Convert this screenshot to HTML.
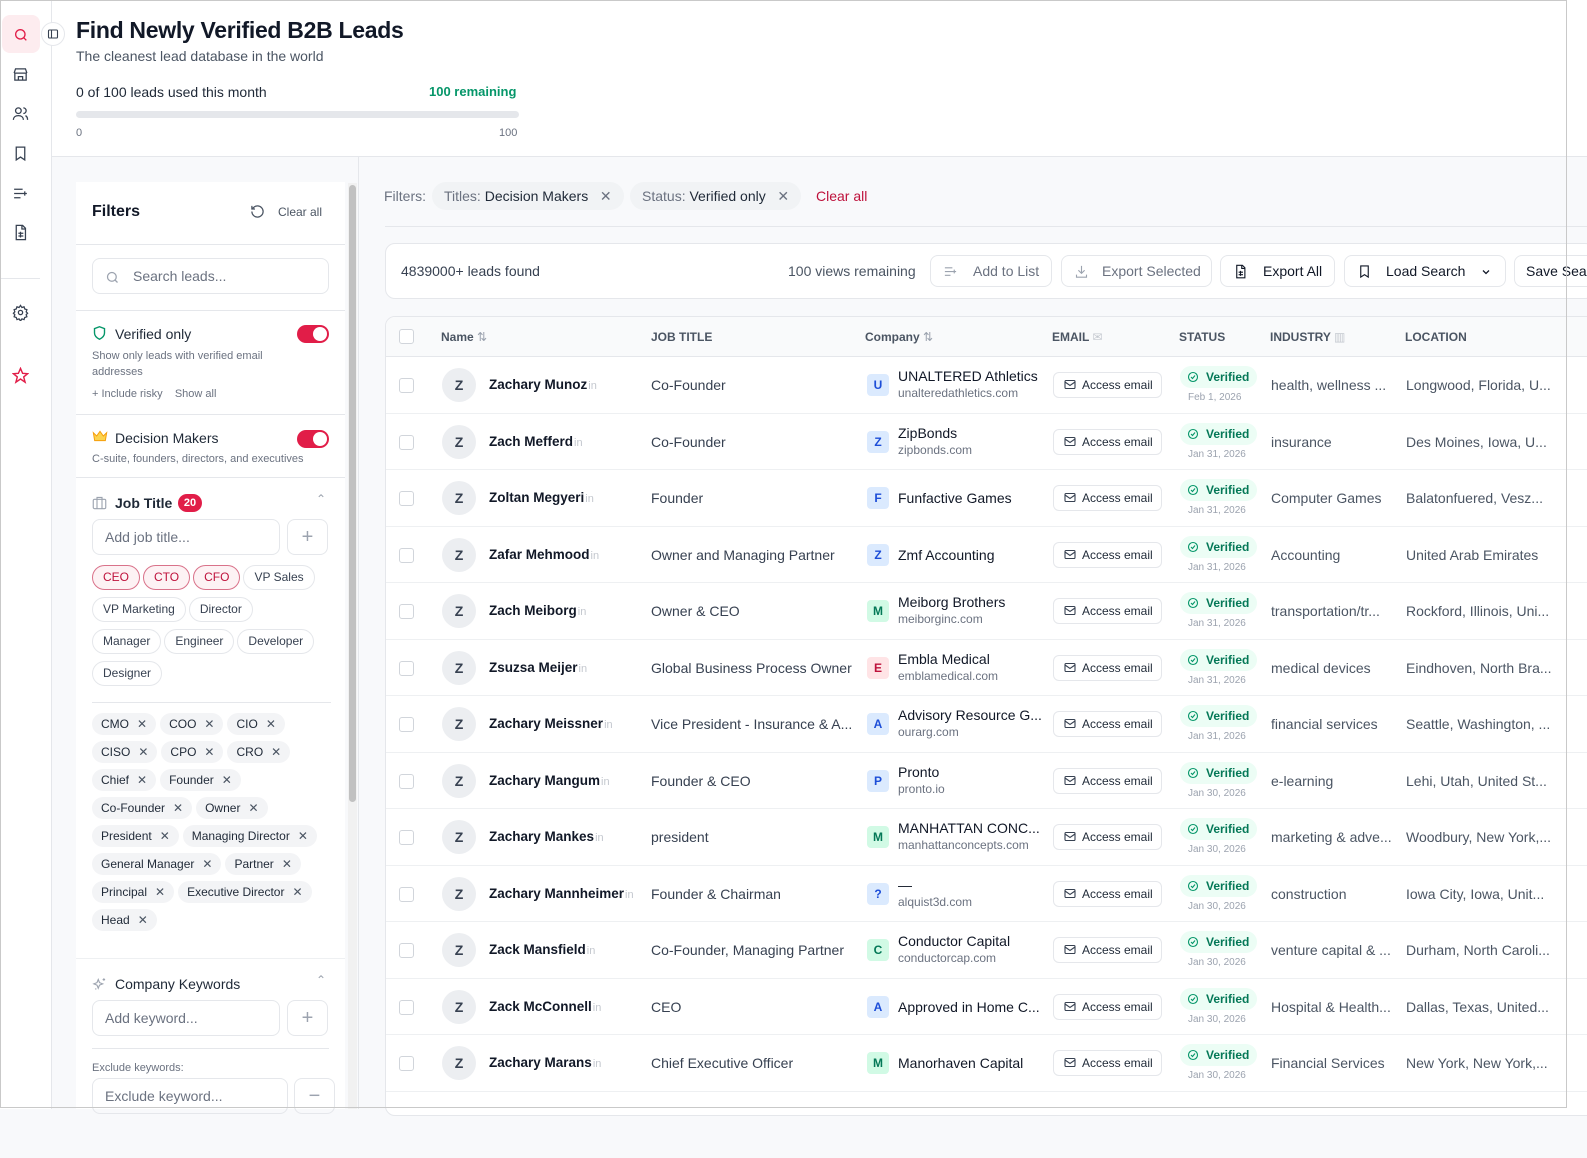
<!DOCTYPE html>
<html><head><meta charset="utf-8">
<style>
*{box-sizing:border-box;margin:0;padding:0}
body{width:1587px;height:1109px;overflow:hidden;font-family:"Liberation Sans",Arial,sans-serif;color:#111827;background:#f8f9fb;position:relative}
.abs{position:absolute}
.frame{position:absolute;left:0;top:0;width:1567px;height:1108px;border:1px solid #c9c9c9;pointer-events:none;z-index:50}
.side{position:absolute;left:0;top:0;width:52px;height:1109px;background:#fff;border-right:1px solid #e5e7eb}
.side svg{position:absolute;left:12px}
.head{position:absolute;left:52px;top:0;width:1535px;height:157px;background:#fff;border-bottom:1px solid #e5e7eb}
.fp{position:absolute;left:76px;top:182px;width:269px;height:927px;background:#fff}
.sec{border-bottom:1px solid #e5e7eb}
.chip{display:inline-block;border:1px solid #e5e7eb;border-radius:14px;padding:0 10px;height:25px;line-height:23px;font-size:12px;color:#374151;margin:0 3px 7px 0}
.chip.r{border-color:#d9728a;background:#fdf2f4;color:#be123c}
.tg{display:inline-block;background:#f3f4f6;border-radius:14px;padding:0 9px;height:22px;line-height:22px;font-size:12px;color:#1f2937;margin:0 4px 6px 0}
.tg b{font-weight:normal;color:#4b5563;margin-left:8px;font-size:12px}
.inp{position:absolute;height:36px;border:1px solid #e5e7eb;border-radius:8px;font-size:14px;color:#6b7280;line-height:34px;padding-left:12px}
.pbtn{position:absolute;width:41px;height:36px;border:1px solid #e5e7eb;border-radius:8px;text-align:center;line-height:34px;color:#9ca3af;font-size:20px}
.tog{position:absolute;width:32px;height:18px;border-radius:9px;background:#e11d48}
.tog:after{content:"";position:absolute;right:2px;top:2px;width:14px;height:14px;border-radius:50%;background:#fff}
.btn{position:absolute;top:255px;height:32px;border:1px solid #e5e7eb;border-radius:8px;background:#fff;font-size:14px;line-height:30px}
.tbl{position:absolute;left:385px;top:316px;width:1220px;height:800px;background:#fff;border:1px solid #e5e7eb;border-radius:10px;overflow:hidden}
.th{position:absolute;left:0;top:0;width:100%;height:40px;background:#f9fafb;border-bottom:1px solid #e5e7eb;font-size:12px;font-weight:bold;color:#4b5563}
.th span{position:absolute;top:13px}
.row{position:relative;height:56.5px;border-bottom:1px solid #eef0f2;font-size:14px}
.row>*{position:absolute}
.cb{left:13px;top:21px;width:15px;height:15px;border:1px solid #d1d5db;border-radius:3px}
.av{left:56px;top:11px;width:34px;height:34px;border-radius:50%;background:#eceef1;text-align:center;line-height:34px;font-weight:bold;font-size:14px;color:#374151}
.nm{left:103px;top:20px;font-weight:bold;color:#111827;font-size:13.5px}
.nm i{font-style:normal;color:#c4c8cf;font-weight:normal;font-size:11px;margin-left:1px}
.jt{left:265px;top:20px;color:#374151}
.lg{left:481px;top:17px;width:22px;height:22px;border-radius:4px;text-align:center;line-height:22px;font-size:12px;font-weight:bold}
.lg.b{background:#dbeafe;color:#1d4ed8}.lg.g{background:#d1fae5;color:#047857}.lg.p{background:#ffe4e6;color:#be123c}
.cn{left:512px;top:11px;color:#111827;line-height:17px}
.cn.s{top:20px}
.cn small{display:block;font-size:12px;color:#6b7280;line-height:16px}
.em{left:667px;top:15px;width:109px;height:26px;border:1px solid #e5e7eb;border-radius:6px;font-size:12px;line-height:24px;padding-left:28px;color:#1f2937}
.em svg{position:absolute;left:10px;top:6px}
.st{left:794px;top:9px;height:22px;padding:0 8px 0 26px;background:#ecfdf5;border-radius:11px;color:#047857;font-size:12px;font-weight:bold;line-height:22px}
.st svg{position:absolute;left:7px;top:5px}
.dt{left:802px;top:35px;font-size:10px;color:#9ca3af}
.in{left:885px;top:20px;color:#4b5563}
.lc{left:1020px;top:20px;color:#4b5563}
</style></head><body>
<div class="frame"></div>
<div class="side">
 <div class="abs" style="left:2px;top:15px;width:38px;height:38px;border-radius:8px;background:#fdecef"></div>
 <svg style="left:13px;top:27px" width="16" height="16" viewBox="0 0 24 24" fill="none" stroke="#e11d48" stroke-width="2"><circle cx="11" cy="11" r="7"/><path d="M20 20l-4-4"/></svg>
 <svg style="top:66px" width="17" height="17" viewBox="0 0 24 24" fill="none" stroke="#374151" stroke-width="1.8"><path d="M4 10v10h16V10M3 10l2-6h14l2 6M3 10h18M9 20v-5h6v5"/></svg>
 <svg style="top:105px" width="17" height="17" viewBox="0 0 24 24" fill="none" stroke="#374151" stroke-width="1.8"><circle cx="9" cy="8" r="4"/><path d="M2 21c0-4 3-6 7-6s7 2 7 6M16 4a4 4 0 010 8M19 15c2 1 3 3 3 6"/></svg>
 <svg style="top:145px" width="17" height="17" viewBox="0 0 24 24" fill="none" stroke="#374151" stroke-width="1.8"><path d="M6 3h12v18l-6-4-6 4z"/></svg>
 <svg style="top:185px" width="17" height="17" viewBox="0 0 24 24" fill="none" stroke="#374151" stroke-width="1.8"><path d="M3 6h12M3 12h12M3 18h9M18 9v6M15 12h6"/></svg>
 <svg style="top:224px" width="17" height="17" viewBox="0 0 24 24" fill="none" stroke="#374151" stroke-width="1.8"><path d="M6 2h9l4 4v16H6zM14 2v5h5M9 13h7M9 17h7M12 11v8"/></svg>
 <div class="abs" style="left:0;top:278px;width:40px;height:1px;background:#e5e7eb"></div>
 <svg style="top:304px" width="17" height="17" viewBox="0 0 24 24" fill="none" stroke="#374151" stroke-width="1.8"><circle cx="12" cy="12" r="3"/><path d="M12 2l2 3 3-1 1 3 3 1-1 3 2 2-2 2 1 3-3 1-1 3-3-1-2 3-2-3-3 1-1-3-3-1 1-3-2-2 2-2-1-3 3-1 1-3 3 1z"/></svg>
 <svg style="top:367px" width="17" height="17" viewBox="0 0 24 24" fill="none" stroke="#e11d48" stroke-width="2"><path d="M12 2l3 7 7 .5-5.5 4.5 2 7.5L12 17l-6.5 4.5 2-7.5L2 9.5 9 9z"/></svg>
</div>
<div class="abs" style="left:41px;top:22px;width:24px;height:24px;border-radius:50%;background:#fff;border:1px solid #e5e7eb;z-index:5"><svg style="position:absolute;left:5px;top:5px" width="12" height="12" viewBox="0 0 24 24" fill="none" stroke="#374151" stroke-width="2.2"><rect x="3" y="4" width="18" height="16" rx="2"/><path d="M9 4v16"/></svg></div>
<div class="head">
 <div class="abs" style="left:24px;top:17px;font-size:23px;font-weight:bold;color:#111827;letter-spacing:-0.3px">Find Newly Verified B2B Leads</div>
 <div class="abs" style="left:24px;top:48px;font-size:14px;color:#4b5563">The cleanest lead database in the world</div>
 <div class="abs" style="left:24px;top:84px;font-size:14px;color:#1f2937">0 of 100 leads used this month</div>
 <div class="abs" style="left:377px;top:84px;font-size:13px;font-weight:bold;color:#059669">100 remaining</div>
 <div class="abs" style="left:24px;top:111px;width:443px;height:7px;border-radius:4px;background:#e5e7eb"></div>
 <div class="abs" style="left:24px;top:127px;font-size:11px;color:#6b7280">0</div>
 <div class="abs" style="left:447px;top:127px;font-size:11px;color:#6b7280">100</div>
</div>
<div class="fp">
 <div class="sec" style="height:63px;position:relative">
  <div class="abs" style="left:16px;top:21px;font-size:16px;font-weight:bold">Filters</div>
  <svg class="abs" style="left:174px;top:22px" width="15" height="15" viewBox="0 0 24 24" fill="none" stroke="#4b5563" stroke-width="2"><path d="M3 12a9 9 0 109-9 9 9 0 00-6.5 2.8L3 8M3 3v5h5"/></svg>
  <div class="abs" style="left:202px;top:23px;font-size:12px;color:#4b5563">Clear all</div>
 </div>
 <div class="sec" style="height:66px;position:relative">
  <div class="inp" style="left:16px;top:13px;width:237px;padding-left:40px;color:#6b7280">Search leads...</div>
  <svg class="abs" style="left:29px;top:25px" width="15" height="15" viewBox="0 0 24 24" fill="none" stroke="#9ca3af" stroke-width="2"><circle cx="11" cy="11" r="7"/><path d="M20 20l-4-4"/></svg>
 </div>
 <div class="sec" style="height:104px;position:relative">
  <svg class="abs" style="left:16px;top:14px" width="15" height="16" viewBox="0 0 24 24" fill="none" stroke="#059669" stroke-width="2.2"><path d="M12 2l8 3v7c0 5-4 8-8 10-4-2-8-5-8-10V5z"/></svg>
  <div class="abs" style="left:39px;top:15px;font-size:14px;color:#1f2937">Verified only</div>
  <div class="tog" style="left:221px;top:14px"></div>
  <div class="abs" style="left:16px;top:37px;font-size:11px;color:#6b7280;line-height:16px;width:210px">Show only leads with verified email addresses</div>
  <div class="abs" style="left:16px;top:77px;font-size:11px;color:#6b7280">+ Include risky &nbsp;&nbsp; Show all</div>
 </div>
 <div class="sec" style="height:63px;position:relative">
  <svg class="abs" style="left:16px;top:14px" width="16" height="14" viewBox="0 0 24 20" fill="#fcd34d" stroke="#f59e0b" stroke-width="1.5"><path d="M2 5l5 5 5-7 5 7 5-5-2 12H4z"/></svg>
  <div class="abs" style="left:39px;top:15px;font-size:14px;color:#1f2937">Decision Makers</div>
  <div class="tog" style="left:221px;top:15px"></div>
  <div class="abs" style="left:16px;top:38px;font-size:11px;color:#6b7280">C-suite, founders, directors, and executives</div>
 </div>
 <div style="position:relative;height:224px">
  <svg class="abs" style="left:16px;top:18px" width="15" height="14" viewBox="0 0 24 22" fill="none" stroke="#9ca3af" stroke-width="1.8"><rect x="2" y="5" width="20" height="15" rx="2"/><path d="M8 5V2h8v3M8 5v15M16 5v15"/></svg>
  <div class="abs" style="left:39px;top:17px;font-size:14px;font-weight:bold;color:#1f2937">Job Title</div>
  <div class="abs" style="left:102px;top:16px;width:24px;height:18px;border-radius:9px;background:#e11d48;color:#fff;font-size:11px;font-weight:bold;text-align:center;line-height:18px">20</div>
  <div class="abs" style="left:240px;top:14px;font-size:12px;color:#9ca3af">&#8963;</div>
  <div class="inp" style="left:16px;top:41px;width:188px">Add job title...</div>
  <div class="pbtn" style="left:211px;top:41px">+</div>
  <div class="abs" style="left:16px;top:87px;width:226px">
   <span class="chip r">CEO</span><span class="chip r">CTO</span><span class="chip r">CFO</span><span class="chip">VP Sales</span><span class="chip">VP Marketing</span><span class="chip">Director</span><span class="chip">Manager</span><span class="chip">Engineer</span><span class="chip">Developer</span><span class="chip">Designer</span>
  </div>
 </div>
 <div style="position:relative;height:256px;margin:0 14px 0 16px;border-top:1px solid #e5e7eb">
  <div class="abs" style="left:0;top:10px;width:240px">
   <span class="tg">CMO<b>✕</b></span><span class="tg">COO<b>✕</b></span><span class="tg">CIO<b>✕</b></span><span class="tg">CISO<b>✕</b></span><span class="tg">CPO<b>✕</b></span><span class="tg">CRO<b>✕</b></span><span class="tg">Chief<b>✕</b></span><span class="tg">Founder<b>✕</b></span><span class="tg">Co-Founder<b>✕</b></span><span class="tg">Owner<b>✕</b></span><span class="tg">President<b>✕</b></span><span class="tg">Managing Director<b>✕</b></span><span class="tg">General Manager<b>✕</b></span><span class="tg">Partner<b>✕</b></span><span class="tg">Principal<b>✕</b></span><span class="tg">Executive Director<b>✕</b></span><span class="tg">Head<b>✕</b></span>
  </div>
 </div>
 <div style="position:relative;height:200px;border-top:1px solid #eef0f2">
  <svg class="abs" style="left:16px;top:18px" width="15" height="15" viewBox="0 0 24 24" fill="none" stroke="#9ca3af" stroke-width="1.8"><path d="M10 4l2 5 5 2-5 2-2 5-2-5-5-2 5-2zM19 2v4M17 4h4M5 19h2"/></svg>
  <div class="abs" style="left:39px;top:17px;font-size:14px;color:#1f2937">Company Keywords</div>
  <div class="abs" style="left:240px;top:14px;font-size:12px;color:#9ca3af">&#8963;</div>
  <div class="inp" style="left:16px;top:41px;width:188px">Add keyword...</div>
  <div class="pbtn" style="left:211px;top:41px">+</div>
  <div class="abs" style="left:16px;top:89px;width:237px;height:1px;background:#e5e7eb"></div>
  <div class="abs" style="left:16px;top:103px;font-size:11px;color:#6b7280">Exclude keywords:</div>
  <div class="inp" style="left:16px;top:119px;width:196px">Exclude keyword...</div>
  <div class="pbtn" style="left:218px;top:119px">−</div>
 </div>
</div>
<div class="abs" style="left:348px;top:183px;width:9px;height:926px;background:#f1f1f1"></div>
<div class="abs" style="left:349px;top:185px;width:7px;height:617px;border-radius:4px;background:#c1c1c1"></div>
<div class="abs" style="left:358px;top:157px;width:1px;height:952px;background:#e5e7eb"></div>
<div class="abs" style="left:384px;top:188px;font-size:14px;color:#6b7280">Filters:</div>
<div class="abs" style="left:432px;top:182px;height:28px;border-radius:14px;background:#f1f3f5;padding:0 12px;line-height:28px;font-size:14px;color:#6b7280">Titles: <span style="color:#1f2937">Decision Makers</span> &nbsp;&nbsp;✕</div>
<div class="abs" style="left:630px;top:182px;height:28px;border-radius:14px;background:#f1f3f5;padding:0 12px;line-height:28px;font-size:14px;color:#6b7280">Status: <span style="color:#1f2937">Verified only</span> &nbsp;&nbsp;✕</div>
<div class="abs" style="left:816px;top:188px;font-size:14px;color:#be123c">Clear all</div>
<div class="abs" style="left:385px;top:226px;width:1202px;height:1px;background:#e5e7eb"></div>
<div class="abs" style="left:385px;top:243px;width:1210px;height:56px;background:#fff;border:1px solid #e5e7eb;border-radius:10px"></div>
<div class="abs" style="left:401px;top:263px;font-size:14px;color:#374151">4839000+ leads found</div>
<div class="abs" style="left:788px;top:263px;font-size:14px;color:#4b5563">100 views remaining</div>
<div class="btn" style="left:930px;width:122px;color:#6b7280;padding-left:42px">Add to List<svg style="position:absolute;left:12px;top:8px" width="15" height="15" viewBox="0 0 24 24" fill="none" stroke="#9ca3af" stroke-width="1.8"><path d="M3 6h12M3 12h12M3 18h9M18 9v6M15 12h6"/></svg></div>
<div class="btn" style="left:1061px;width:151px;color:#6b7280;padding-left:40px">Export Selected<svg style="position:absolute;left:12px;top:8px" width="15" height="15" viewBox="0 0 24 24" fill="none" stroke="#9ca3af" stroke-width="1.8"><path d="M12 3v12M7 10l5 5 5-5M4 17v4h16v-4"/></svg></div>
<div class="btn" style="left:1220px;width:115px;color:#111827;padding-left:42px">Export All<svg style="position:absolute;left:12px;top:8px" width="15" height="15" viewBox="0 0 24 24" fill="none" stroke="#111827" stroke-width="1.8"><path d="M6 2h9l4 4v16H6zM14 2v5h5M9 13h7M9 17h7M12 11v8"/></svg></div>
<div class="btn" style="left:1344px;width:162px;color:#111827;padding-left:41px">Load Search<svg style="position:absolute;left:12px;top:8px" width="15" height="15" viewBox="0 0 24 24" fill="none" stroke="#111827" stroke-width="1.8"><path d="M6 3h12v18l-6-4-6 4z"/></svg><svg style="position:absolute;left:135px;top:10px" width="12" height="12" viewBox="0 0 24 24" fill="none" stroke="#111827" stroke-width="2.5"><path d="M6 9l6 6 6-6"/></svg></div>
<div class="btn" style="left:1514px;width:100px;color:#111827;padding-left:11px">Save Search</div>
<div class="tbl">
 <div class="th">
  <div class="abs" style="left:13px;top:12px;width:15px;height:15px;border:1px solid #d1d5db;border-radius:3px;background:#fff"></div>
  <span style="left:55px">Name <span style="position:static;color:#9ca3af;font-weight:normal">⇅</span></span>
  <span style="left:265px">JOB TITLE</span>
  <span style="left:479px">Company <span style="position:static;color:#9ca3af;font-weight:normal">⇅</span></span>
  <span style="left:666px">EMAIL <span style="position:static;color:#c4c8cf;font-weight:normal">✉</span></span>
  <span style="left:793px">STATUS</span>
  <span style="left:884px">INDUSTRY <span style="position:static;color:#c4c8cf;font-weight:normal">▥</span></span>
  <span style="left:1019px">LOCATION</span>
 </div>
 <div style="position:absolute;left:0;top:40px;width:100%">
<div class="row"><div class="cb"></div><div class="av">Z</div><div class="nm">Zachary Munoz<i>in</i></div><div class="jt">Co-Founder</div><div class="lg b">U</div><div class="cn">UNALTERED Athletics<small>unalteredathletics.com</small></div><div class="em"><svg width="12" height="11" viewBox="0 0 24 20" fill="none" stroke="#374151" stroke-width="2.2"><rect x="2" y="2" width="20" height="16" rx="2"/><path d="M2 5l10 7 10-7"/></svg>Access email</div><div class="st"><svg width="12" height="12" viewBox="0 0 24 24" fill="none" stroke="#059669" stroke-width="2.2"><circle cx="12" cy="12" r="9"/><path d="M8 12l3 3 5-6"/></svg>Verified</div><div class="dt">Feb 1, 2026</div><div class="in">health, wellness ...</div><div class="lc">Longwood, Florida, U...</div></div>
<div class="row"><div class="cb"></div><div class="av">Z</div><div class="nm">Zach Mefferd<i>in</i></div><div class="jt">Co-Founder</div><div class="lg b">Z</div><div class="cn">ZipBonds<small>zipbonds.com</small></div><div class="em"><svg width="12" height="11" viewBox="0 0 24 20" fill="none" stroke="#374151" stroke-width="2.2"><rect x="2" y="2" width="20" height="16" rx="2"/><path d="M2 5l10 7 10-7"/></svg>Access email</div><div class="st"><svg width="12" height="12" viewBox="0 0 24 24" fill="none" stroke="#059669" stroke-width="2.2"><circle cx="12" cy="12" r="9"/><path d="M8 12l3 3 5-6"/></svg>Verified</div><div class="dt">Jan 31, 2026</div><div class="in">insurance</div><div class="lc">Des Moines, Iowa, U...</div></div>
<div class="row"><div class="cb"></div><div class="av">Z</div><div class="nm">Zoltan Megyeri<i>in</i></div><div class="jt">Founder</div><div class="lg b">F</div><div class="cn s">Funfactive Games</div><div class="em"><svg width="12" height="11" viewBox="0 0 24 20" fill="none" stroke="#374151" stroke-width="2.2"><rect x="2" y="2" width="20" height="16" rx="2"/><path d="M2 5l10 7 10-7"/></svg>Access email</div><div class="st"><svg width="12" height="12" viewBox="0 0 24 24" fill="none" stroke="#059669" stroke-width="2.2"><circle cx="12" cy="12" r="9"/><path d="M8 12l3 3 5-6"/></svg>Verified</div><div class="dt">Jan 31, 2026</div><div class="in">Computer Games</div><div class="lc">Balatonfuered, Vesz...</div></div>
<div class="row"><div class="cb"></div><div class="av">Z</div><div class="nm">Zafar Mehmood<i>in</i></div><div class="jt">Owner and Managing Partner</div><div class="lg b">Z</div><div class="cn s">Zmf Accounting</div><div class="em"><svg width="12" height="11" viewBox="0 0 24 20" fill="none" stroke="#374151" stroke-width="2.2"><rect x="2" y="2" width="20" height="16" rx="2"/><path d="M2 5l10 7 10-7"/></svg>Access email</div><div class="st"><svg width="12" height="12" viewBox="0 0 24 24" fill="none" stroke="#059669" stroke-width="2.2"><circle cx="12" cy="12" r="9"/><path d="M8 12l3 3 5-6"/></svg>Verified</div><div class="dt">Jan 31, 2026</div><div class="in">Accounting</div><div class="lc">United Arab Emirates</div></div>
<div class="row"><div class="cb"></div><div class="av">Z</div><div class="nm">Zach Meiborg<i>in</i></div><div class="jt">Owner &amp; CEO</div><div class="lg g">M</div><div class="cn">Meiborg Brothers<small>meiborginc.com</small></div><div class="em"><svg width="12" height="11" viewBox="0 0 24 20" fill="none" stroke="#374151" stroke-width="2.2"><rect x="2" y="2" width="20" height="16" rx="2"/><path d="M2 5l10 7 10-7"/></svg>Access email</div><div class="st"><svg width="12" height="12" viewBox="0 0 24 24" fill="none" stroke="#059669" stroke-width="2.2"><circle cx="12" cy="12" r="9"/><path d="M8 12l3 3 5-6"/></svg>Verified</div><div class="dt">Jan 31, 2026</div><div class="in">transportation/tr...</div><div class="lc">Rockford, Illinois, Uni...</div></div>
<div class="row"><div class="cb"></div><div class="av">Z</div><div class="nm">Zsuzsa Meijer<i>in</i></div><div class="jt">Global Business Process Owner</div><div class="lg p">E</div><div class="cn">Embla Medical<small>emblamedical.com</small></div><div class="em"><svg width="12" height="11" viewBox="0 0 24 20" fill="none" stroke="#374151" stroke-width="2.2"><rect x="2" y="2" width="20" height="16" rx="2"/><path d="M2 5l10 7 10-7"/></svg>Access email</div><div class="st"><svg width="12" height="12" viewBox="0 0 24 24" fill="none" stroke="#059669" stroke-width="2.2"><circle cx="12" cy="12" r="9"/><path d="M8 12l3 3 5-6"/></svg>Verified</div><div class="dt">Jan 31, 2026</div><div class="in">medical devices</div><div class="lc">Eindhoven, North Bra...</div></div>
<div class="row"><div class="cb"></div><div class="av">Z</div><div class="nm">Zachary Meissner<i>in</i></div><div class="jt">Vice President - Insurance &amp; A...</div><div class="lg b">A</div><div class="cn">Advisory Resource G...<small>ourarg.com</small></div><div class="em"><svg width="12" height="11" viewBox="0 0 24 20" fill="none" stroke="#374151" stroke-width="2.2"><rect x="2" y="2" width="20" height="16" rx="2"/><path d="M2 5l10 7 10-7"/></svg>Access email</div><div class="st"><svg width="12" height="12" viewBox="0 0 24 24" fill="none" stroke="#059669" stroke-width="2.2"><circle cx="12" cy="12" r="9"/><path d="M8 12l3 3 5-6"/></svg>Verified</div><div class="dt">Jan 31, 2026</div><div class="in">financial services</div><div class="lc">Seattle, Washington, ...</div></div>
<div class="row"><div class="cb"></div><div class="av">Z</div><div class="nm">Zachary Mangum<i>in</i></div><div class="jt">Founder &amp; CEO</div><div class="lg b">P</div><div class="cn">Pronto<small>pronto.io</small></div><div class="em"><svg width="12" height="11" viewBox="0 0 24 20" fill="none" stroke="#374151" stroke-width="2.2"><rect x="2" y="2" width="20" height="16" rx="2"/><path d="M2 5l10 7 10-7"/></svg>Access email</div><div class="st"><svg width="12" height="12" viewBox="0 0 24 24" fill="none" stroke="#059669" stroke-width="2.2"><circle cx="12" cy="12" r="9"/><path d="M8 12l3 3 5-6"/></svg>Verified</div><div class="dt">Jan 30, 2026</div><div class="in">e-learning</div><div class="lc">Lehi, Utah, United St...</div></div>
<div class="row"><div class="cb"></div><div class="av">Z</div><div class="nm">Zachary Mankes<i>in</i></div><div class="jt">president</div><div class="lg g">M</div><div class="cn">MANHATTAN CONC...<small>manhattanconcepts.com</small></div><div class="em"><svg width="12" height="11" viewBox="0 0 24 20" fill="none" stroke="#374151" stroke-width="2.2"><rect x="2" y="2" width="20" height="16" rx="2"/><path d="M2 5l10 7 10-7"/></svg>Access email</div><div class="st"><svg width="12" height="12" viewBox="0 0 24 24" fill="none" stroke="#059669" stroke-width="2.2"><circle cx="12" cy="12" r="9"/><path d="M8 12l3 3 5-6"/></svg>Verified</div><div class="dt">Jan 30, 2026</div><div class="in">marketing &amp; adve...</div><div class="lc">Woodbury, New York,...</div></div>
<div class="row"><div class="cb"></div><div class="av">Z</div><div class="nm">Zachary Mannheimer<i>in</i></div><div class="jt">Founder &amp; Chairman</div><div class="lg b">?</div><div class="cn">—<small>alquist3d.com</small></div><div class="em"><svg width="12" height="11" viewBox="0 0 24 20" fill="none" stroke="#374151" stroke-width="2.2"><rect x="2" y="2" width="20" height="16" rx="2"/><path d="M2 5l10 7 10-7"/></svg>Access email</div><div class="st"><svg width="12" height="12" viewBox="0 0 24 24" fill="none" stroke="#059669" stroke-width="2.2"><circle cx="12" cy="12" r="9"/><path d="M8 12l3 3 5-6"/></svg>Verified</div><div class="dt">Jan 30, 2026</div><div class="in">construction</div><div class="lc">Iowa City, Iowa, Unit...</div></div>
<div class="row"><div class="cb"></div><div class="av">Z</div><div class="nm">Zack Mansfield<i>in</i></div><div class="jt">Co-Founder, Managing Partner</div><div class="lg g">C</div><div class="cn">Conductor Capital<small>conductorcap.com</small></div><div class="em"><svg width="12" height="11" viewBox="0 0 24 20" fill="none" stroke="#374151" stroke-width="2.2"><rect x="2" y="2" width="20" height="16" rx="2"/><path d="M2 5l10 7 10-7"/></svg>Access email</div><div class="st"><svg width="12" height="12" viewBox="0 0 24 24" fill="none" stroke="#059669" stroke-width="2.2"><circle cx="12" cy="12" r="9"/><path d="M8 12l3 3 5-6"/></svg>Verified</div><div class="dt">Jan 30, 2026</div><div class="in">venture capital &amp; ...</div><div class="lc">Durham, North Caroli...</div></div>
<div class="row"><div class="cb"></div><div class="av">Z</div><div class="nm">Zack McConnell<i>in</i></div><div class="jt">CEO</div><div class="lg b">A</div><div class="cn s">Approved in Home C...</div><div class="em"><svg width="12" height="11" viewBox="0 0 24 20" fill="none" stroke="#374151" stroke-width="2.2"><rect x="2" y="2" width="20" height="16" rx="2"/><path d="M2 5l10 7 10-7"/></svg>Access email</div><div class="st"><svg width="12" height="12" viewBox="0 0 24 24" fill="none" stroke="#059669" stroke-width="2.2"><circle cx="12" cy="12" r="9"/><path d="M8 12l3 3 5-6"/></svg>Verified</div><div class="dt">Jan 30, 2026</div><div class="in">Hospital &amp; Health...</div><div class="lc">Dallas, Texas, United...</div></div>
<div class="row"><div class="cb"></div><div class="av">Z</div><div class="nm">Zachary Marans<i>in</i></div><div class="jt">Chief Executive Officer</div><div class="lg g">M</div><div class="cn s">Manorhaven Capital</div><div class="em"><svg width="12" height="11" viewBox="0 0 24 20" fill="none" stroke="#374151" stroke-width="2.2"><rect x="2" y="2" width="20" height="16" rx="2"/><path d="M2 5l10 7 10-7"/></svg>Access email</div><div class="st"><svg width="12" height="12" viewBox="0 0 24 24" fill="none" stroke="#059669" stroke-width="2.2"><circle cx="12" cy="12" r="9"/><path d="M8 12l3 3 5-6"/></svg>Verified</div><div class="dt">Jan 30, 2026</div><div class="in">Financial Services</div><div class="lc">New York, New York,...</div></div>
 </div>
</div>
</body></html>
